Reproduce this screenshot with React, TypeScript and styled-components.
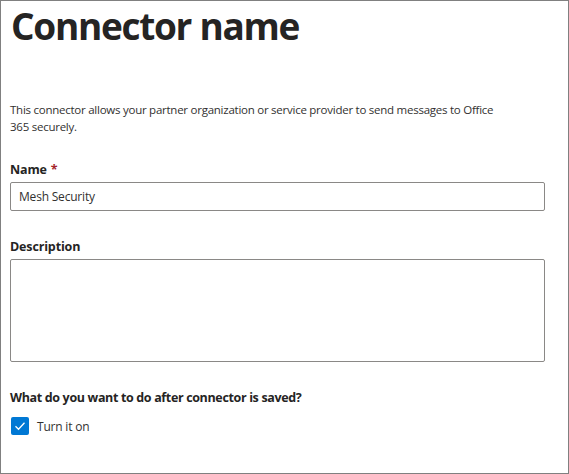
import styled, { createGlobalStyle } from "styled-components";

const GlobalStyle = createGlobalStyle`
  html, body {
    margin: 0;
    padding: 0;
    background: #ffffff;
  }
  body {
    font-family: "Open Sans", "Noto Sans", sans-serif;
    color: #323130;
  }
`;

const Frame = styled.div`
  box-sizing: border-box;
  width: 569px;
  height: 474px;
  border: 1px solid #808080;
  padding: 0 23px 0 9px;
  display: flex;
  flex-direction: column;
`;

const Title = styled.h1`
  margin: 1px 0 0 1px;
  font-size: 37px;
  line-height: 48px;
  font-weight: 700;
  color: #252423;
  letter-spacing: -1.3px;
`;

const Intro = styled.p`
  margin: 51px 0 0;
  max-width: 492px;
  font-size: 11.5px;
  line-height: 17px;
  letter-spacing: -0.25px;
  color: #323130;
`;

const Field = styled.div<{ $gap: number }>`
  display: flex;
  flex-direction: column;
  margin-top: ${(p) => p.$gap}px;
`;

const Label = styled.label`
  font-size: 12.5px;
  line-height: 18px;
  font-weight: 700;
  letter-spacing: -0.15px;
  color: #252423;
  margin-bottom: 3px;
`;

const Required = styled.span`
  color: #a4262c;
  margin-left: 4px;
`;

const TextInput = styled.input`
  box-sizing: border-box;
  height: 29px;
  width: 100%;
  border: 1px solid #8a8886;
  border-radius: 2px;
  padding: 0 8px;
  font-family: "Open Sans", "Noto Sans", sans-serif;
  font-size: 12px;
  letter-spacing: -0.2px;
  color: #323130;
  outline: none;
`;

const TextArea = styled.textarea`
  box-sizing: border-box;
  height: 103px;
  width: 100%;
  border: 1px solid #8a8886;
  border-radius: 2px;
  resize: none;
  outline: none;
  font-family: "Open Sans", "Noto Sans", sans-serif;
`;

const Question = styled.div`
  margin-top: 27px;
  font-size: 12.5px;
  line-height: 18px;
  font-weight: 700;
  letter-spacing: -0.35px;
  color: #252423;
`;

const CheckRow = styled.label`
  display: flex;
  align-items: center;
  gap: 8px;
  margin-top: 10px;
  margin-left: 1px;
  font-size: 12px;
  letter-spacing: -0.2px;
  color: #323130;
`;

const Box = styled.span`
  box-sizing: border-box;
  width: 18px;
  height: 18px;
  border-radius: 2px;
  background: #0078d4;
  display: flex;
  align-items: center;
  justify-content: center;
`;

export default function App() {
  return (
    <>
      <GlobalStyle />
      <Frame>
        <Title>Connector name</Title>
        <Intro>
          This connector allows your partner organization or service provider to send messages to Office 365 securely.
        </Intro>
        <Field $gap={26}>
          <Label>
            Name<Required>*</Required>
          </Label>
          <TextInput defaultValue="Mesh Security" />
        </Field>
        <Field $gap={27}>
          <Label>Description</Label>
          <TextArea />
        </Field>
        <Question>What do you want to do after connector is saved?</Question>
        <CheckRow>
          <Box>
            <svg width="12" height="12" viewBox="0 0 12 12">
              <path d="M1.5 6.3 L4.5 9.2 L10.5 2.8" fill="none" stroke="#ffffff" strokeWidth="1.3" />
            </svg>
          </Box>
          Turn it on
        </CheckRow>
      </Frame>
    </>
  );
}
